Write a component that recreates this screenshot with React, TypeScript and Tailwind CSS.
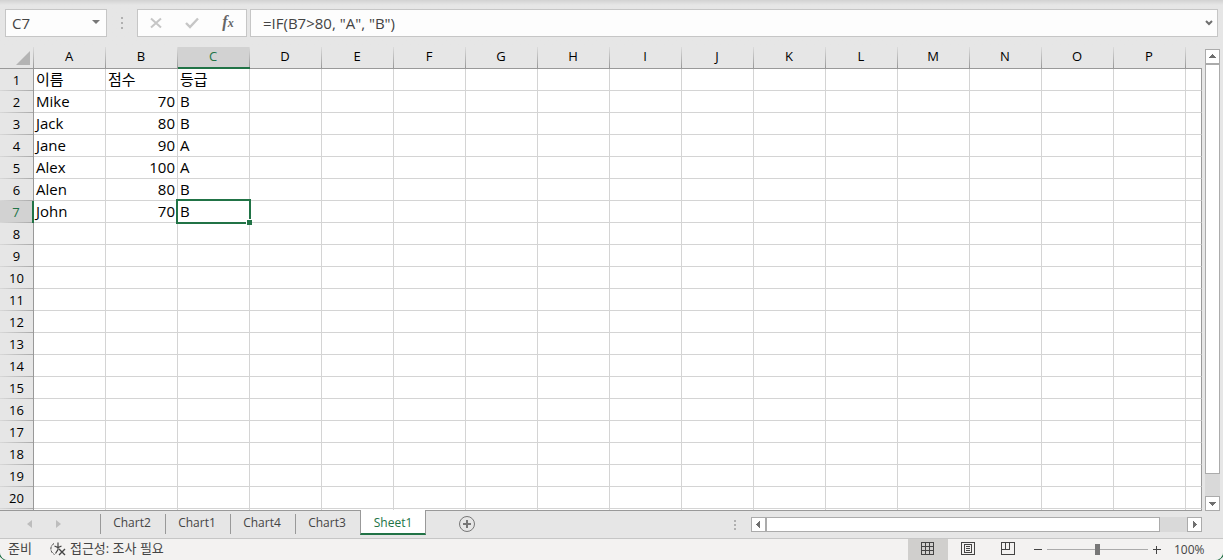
import type { ReactNode } from 'react'
import { clsx } from 'clsx'

const columns = 'ABCDEFGHIJKLMNOP'.split('')
const rowCount = 20
const selected = { row: 7, column: 'C' }

const data: (string | number)[][] = [
  ['이름', '점수', '등급'],
  ['Mike', 70, 'B'],
  ['Jack', 80, 'B'],
  ['Jane', 90, 'A'],
  ['Alex', 100, 'A'],
  ['Alen', 80, 'B'],
  ['John', 70, 'B'],
]

const tabs = ['Chart2', 'Chart1', 'Chart4', 'Chart3', 'Sheet1']
const activeTab = 'Sheet1'

function Dots({ className }: { className: string }) {
  return (
    <div className={clsx('flex flex-col', className)}>
      <span className="size-[2px] bg-[#b0b0b0]" />
      <span className="size-[2px] bg-[#b0b0b0]" />
      <span className="size-[2px] bg-[#b0b0b0]" />
    </div>
  )
}

const arrowPaths = {
  up: 'M3 8h7v-1h-1v-1h-1v-1h-1v-1h-1v1h-1v1h-1v1h-1z',
  down: 'M3 5h7v1h-1v1h-1v1h-1v1h-1v-1h-1v-1h-1v-1h-1z',
  left: 'M8 3v7h-1v-1h-1v-1h-1v-1h-1v-1h1v-1h1v-1h1v-1z',
  right: 'M5 3v7h1v-1h1v-1h1v-1h1v-1h-1v-1h-1v-1h-1v-1z',
}

function ScrollButton({ direction, label }: { direction: keyof typeof arrowPaths; label: string }) {
  return (
    <button type="button" aria-label={label} className="size-[15px] shrink-0 border border-[#ababab] bg-white">
      <svg className="block size-[13px]" viewBox="0 0 13 13" fill="#6f6f6f" shapeRendering="crispEdges">
        <path d={arrowPaths[direction]} />
      </svg>
    </button>
  )
}

function FormulaBar() {
  return (
    <div className="flex items-center bg-linear-to-b from-[#d2d2d2] to-[#e6e6e6] to-[5px] px-[5px] pt-[9px] pb-[10px] text-[#444]">
      <div className="flex h-7 w-[102px] items-center border border-[#c6c6c6] bg-[#fdfdfd]">
        <input
          aria-label="이름 상자"
          defaultValue="C7"
          className="h-full min-w-0 flex-1 bg-transparent pl-[6px] text-[15px] outline-none"
        />
        <button type="button" aria-label="이름 목록" className="mr-1 flex h-full w-3 items-center justify-center pb-[2px]">
          <svg width="8" height="4" viewBox="0 0 8 4" fill="#777">
            <path d="M0 0h8L4 4z" />
          </svg>
        </button>
      </div>
      <div className="flex w-[30px] justify-center">
        <Dots className="gap-[3px]" />
      </div>
      <div className="flex h-7 w-[110px] items-center border border-[#c6c6c6] bg-[#fdfdfd]">
        <button type="button" aria-label="취소" className="flex h-full flex-1 items-center justify-center">
          <svg width="12" height="12" viewBox="0 0 12 12" fill="none" stroke="#c6c6c6" strokeWidth="2">
            <path d="M1 1.5l10 9M11 1.5l-10 9" />
          </svg>
        </button>
        <button type="button" aria-label="입력" className="flex h-full flex-1 items-center justify-center">
          <svg width="14" height="12" viewBox="0 0 14 12" fill="none" stroke="#c6c6c6" strokeWidth="2.4">
            <path d="M1 6l4 4L13 1.5" />
          </svg>
        </button>
        <button
          type="button"
          aria-label="함수 삽입"
          className="h-full flex-1 pb-[2px] font-['Liberation_Serif',serif] text-[16px] leading-none font-bold text-[#666] italic"
        >
          f<span className="text-[12px]">x</span>
        </button>
      </div>
      <div className="ml-[3px] flex h-7 min-w-0 flex-1 items-center border border-[#c6c6c6] bg-[#fdfdfd]">
        <input
          aria-label="수식 입력줄"
          defaultValue={'=IF(B7>80, "A", "B")'}
          className="h-full min-w-0 flex-1 bg-transparent pl-3 text-[15px] outline-none"
        />
        <button type="button" aria-label="수식 입력줄 확장" className="flex h-full w-4 items-center justify-center pb-px">
          <svg width="8" height="6" viewBox="0 0 8 6" fill="none" stroke="#6f6f6f" strokeWidth="2">
            <path d="M1 1l3 3 3-3" />
          </svg>
        </button>
      </div>
    </div>
  )
}

function Grid() {
  return (
    <div className="min-w-0 flex-1 overflow-hidden border-b border-[#999]">
      <table className="w-full table-fixed border-separate border-spacing-0 text-[15px] leading-[21px] text-black">
        <colgroup>
          <col className="w-[34px]" />
          {columns.map((c) => (
            <col key={c} className="w-[72px]" />
          ))}
          <col />
        </colgroup>
        <thead>
          <tr className="h-[22px] text-[13px]">
            <th className="border-b border-[#999] bg-[linear-gradient(#dcdcdc,#999)] bg-size-[1px_100%] bg-right bg-no-repeat p-0">
              <svg className="ml-4 block" width="14" height="14" viewBox="0 0 14 14" fill="#b4b4b4">
                <path d="M14 0v14H0z" />
              </svg>
            </th>
            {columns.map((c) => (
              <th
                key={c}
                scope="col"
                className={clsx(
                  'h-[22px] bg-[linear-gradient(#dcdcdc,#999)] bg-size-[1px_100%] bg-right bg-no-repeat p-0 pr-[2px] leading-4 font-normal',
                  c === selected.column
                    ? 'border-b-2 border-[#217346] bg-[#d2d2d2] pb-[3px] text-[#217346]'
                    : 'border-b border-[#999] pb-1',
                )}
              >
                {c}
              </th>
            ))}
            <th className="border-b border-[#999] p-0" />
          </tr>
        </thead>
        <tbody>
          {Array.from({ length: rowCount }, (_, i) => i + 1).map((row) => (
            <tr key={row} className="h-[22px]">
              <th
                scope="row"
                className={clsx(
                  'h-[22px] bg-[linear-gradient(90deg,#d8d8d8,#aaa)] bg-size-[100%_1px] bg-bottom bg-no-repeat p-0 text-[13px] leading-[22px] font-normal',
                  row === selected.row
                    ? 'border-r-2 border-[#217346] bg-[#d2d2d2] text-[#217346]'
                    : 'border-r border-[#999]',
                )}
              >
                {row}
              </th>
              {columns.map((c, ci) => {
                const value = data[row - 1]?.[ci]
                const isSelected = row === selected.row && c === selected.column
                return (
                  <td
                    key={c}
                    className={clsx(
                      'relative h-[22px] border-r border-b border-[#d4d4d4] bg-white p-0 px-[2px] whitespace-nowrap',
                      typeof value === 'number' && 'text-right',
                      isSelected && 'z-10',
                    )}
                  >
                    {value}
                    {isSelected && (
                      <>
                        <span className="absolute -inset-[2px] border-2 border-[#217346]" />
                        <span className="absolute -right-[3px] -bottom-[3px] size-[6px] border-t border-l border-white bg-[#217346]" />
                      </>
                    )}
                  </td>
                )
              })}
              <td className="border-r border-b border-r-[#999] border-b-[#d4d4d4] bg-white p-0" />
            </tr>
          ))}
          <tr className="h-[22px]">
            <td className="border-r border-[#999] p-0" />
            {columns.map((c) => (
              <td key={c} className="border-r border-[#d4d4d4] bg-white p-0" />
            ))}
            <td className="border-r border-[#999] bg-white p-0" />
          </tr>
        </tbody>
      </table>
    </div>
  )
}

function VerticalScrollbar() {
  return (
    <div className="mt-[2px] mr-[3px] ml-[3px] flex w-[15px] flex-col bg-[#d9d9d9]">
      <ScrollButton direction="up" label="위로" />
      <div className="mb-[22px] min-h-0 flex-1 border border-[#ababab] bg-white" />
      <ScrollButton direction="down" label="아래로" />
    </div>
  )
}

function SheetTabs() {
  return (
    <div className="flex h-7 shrink-0 border-b border-[#c6c6c6] text-[12px] text-[#444]">
      <div className="flex w-[100px] shrink-0 items-center gap-6 pl-[27px]">
        <button type="button" aria-label="이전 시트" className="-mt-[2px]">
          <svg width="5" height="8" viewBox="0 0 5 8" fill="#bdbdbd">
            <path d="M5 0v8L0 4z" />
          </svg>
        </button>
        <button type="button" aria-label="다음 시트" className="-mt-[2px]">
          <svg width="5" height="8" viewBox="0 0 5 8" fill="#bdbdbd">
            <path d="M0 0v8l5-4z" />
          </svg>
        </button>
      </div>
      <div className="flex" role="tablist">
        {tabs.map((tab) =>
          tab === activeTab ? (
            <button
              key={tab}
              type="button"
              role="tab"
              aria-selected
              className="z-10 -mt-px h-[25px] w-[66px] border-x border-b-2 border-x-[#999] border-b-[#217346] bg-white pt-[2px] text-[#217346]"
            >
              {tab}
            </button>
          ) : (
            <button
              key={tab}
              type="button"
              role="tab"
              aria-selected={false}
              className="mt-[3px] h-5 w-[65px] border-l border-[#999] pr-[2px] pb-[2px]"
            >
              {tab}
            </button>
          ),
        )}
      </div>
      <button type="button" aria-label="새 시트" className="ml-8 flex h-[26px] items-center">
        <svg width="18" height="18" viewBox="0 0 18 18" fill="none" stroke="#777">
          <circle cx="9" cy="9" r="7.5" />
          <path d="M9 5v8M5 9h8" strokeWidth="2" />
        </svg>
      </button>
      <div className="flex min-w-0 flex-1 items-center justify-end">
        <Dots className="gap-[2px]" />
        <div className="ml-[15px] flex h-[15px] w-[451px] bg-[#d9d9d9]">
          <ScrollButton direction="left" label="왼쪽으로" />
          <div className="mr-[27px] min-w-0 flex-1 border border-[#ababab] bg-white" />
          <ScrollButton direction="right" label="오른쪽으로" />
        </div>
      </div>
      <div className="w-[21px] shrink-0" />
    </div>
  )
}

function ViewButton({ label, active, children }: { label: string; active?: boolean; children: ReactNode }) {
  return (
    <button
      type="button"
      aria-label={label}
      aria-pressed={!!active}
      className={clsx('flex h-full w-10 justify-center pt-[3px]', active && 'bg-[#d0cfcd]')}
    >
      <svg width="14" height="14" viewBox="0 0 14 14" fill="none" stroke="#444" shapeRendering="crispEdges">
        {children}
      </svg>
    </button>
  )
}

function StatusBar() {
  return (
    <div className="flex h-[21px] shrink-0 items-center bg-[#f3f2f1] pl-2 text-[12px] text-[#444]">
      <span className="pb-px text-[13px]">준비</span>
      <button type="button" className="ml-[18px] flex items-center gap-1 pb-px text-[13px]">
        <svg width="16" height="14" viewBox="0 0 16 14" fill="none" stroke="#444">
          <path d="M4 1.5C1.5 3 .5 5.5 1 8c.4 2 1.5 3.5 3.5 4.5" strokeDasharray="3 1" />
          <path d="M8 .5v5M4.5 4l3.500 1.500L11.500 4M8 5.500v2L5.500 11.500" strokeWidth="1.2" />
          <path d="M9 7l6 6M15 7l-6 6" strokeWidth="1.4" />
        </svg>
        접근성: 조사 필요
      </button>
      <div className="ml-auto flex h-full">
        <ViewButton label="기본" active>
          <path d="M.5.5h12v12H.5zM4.500.5v12M8.500.5v12M.5 4.500h12M.5 8.500h12" />
        </ViewButton>
        <ViewButton label="페이지 레이아웃">
          <path d="M.5.5h13v12H.5zM3.500 2.500h7v8h-7zM5 4.500h4M5 6.500h4M5 8.500h4" />
        </ViewButton>
        <ViewButton label="페이지 나누기 미리 보기">
          <path d="M.5.5h13v12H.5zM4.500.5v7M8.500.5v7M.5 7.500h8" />
        </ViewButton>
      </div>
      <button type="button" aria-label="축소" className="ml-[6px]">
        <svg width="8" height="8" viewBox="0 0 8 8" stroke="#444" shapeRendering="crispEdges">
          <path d="M0 3.500h8" />
        </svg>
      </button>
      <input
        type="range"
        aria-label="확대/축소"
        min={10}
        max={190}
        defaultValue={100}
        className="mx-[5px] h-[11px] w-[101px] appearance-none bg-[linear-gradient(#ababab,#ababab)] bg-size-[100%_1px] bg-center bg-no-repeat [&::-webkit-slider-thumb]:h-[11px] [&::-webkit-slider-thumb]:w-[5px] [&::-webkit-slider-thumb]:appearance-none [&::-webkit-slider-thumb]:bg-[#777]"
      />
      <button type="button" aria-label="확대">
        <svg width="8" height="8" viewBox="0 0 8 8" stroke="#444" shapeRendering="crispEdges">
          <path d="M0 3.500h8M3.500 0v8" />
        </svg>
      </button>
      <button type="button" className="ml-[13px] w-[49px] text-left">
        100%
      </button>
    </div>
  )
}

export default function App() {
  return (
    <div className="h-screen overflow-hidden bg-[#eee] font-['Open_Sans','Noto_Sans_CJK_KR',sans-serif]">
      <div className="flex h-full flex-col overflow-hidden rounded-b-lg bg-[#e6e6e6] ring-1 ring-[#217346]">
        <FormulaBar />
        <div className="flex min-h-0 flex-1">
          <Grid />
          <VerticalScrollbar />
        </div>
        <SheetTabs />
        <StatusBar />
      </div>
    </div>
  )
}
